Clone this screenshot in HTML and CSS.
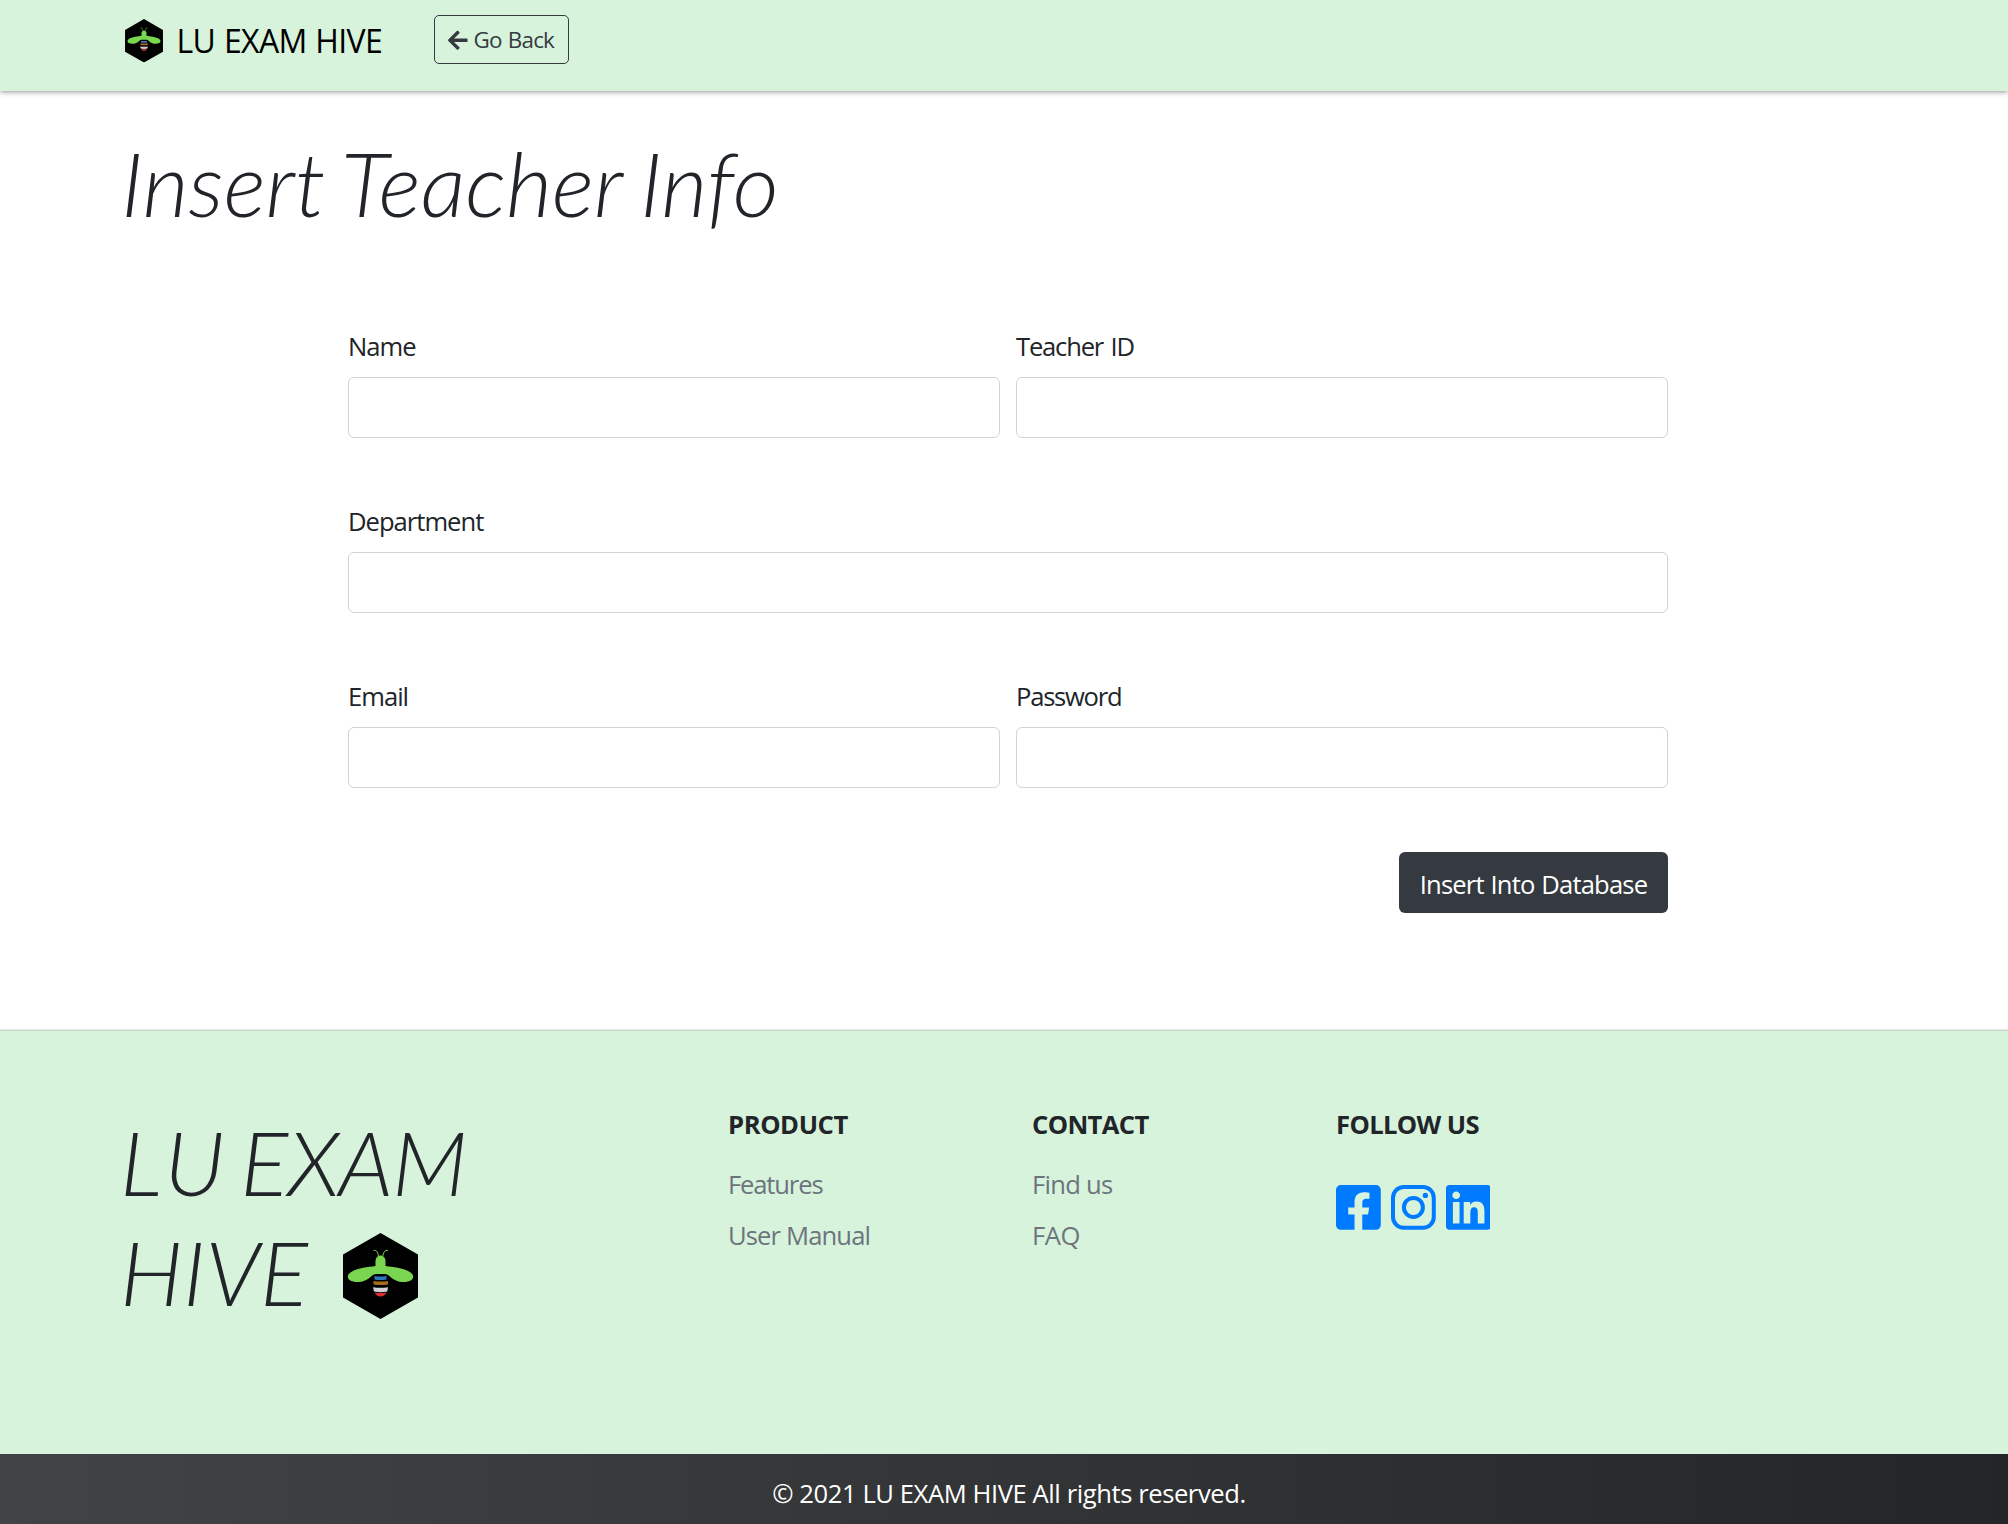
FILE: index.html
```
<!DOCTYPE html>
<html lang="en">
<head>
<meta charset="utf-8">
<title>Insert Teacher Info</title>
<link rel="stylesheet" href="styles.css">
</head>
<body>
<svg class="defs" aria-hidden="true">
  <symbol id="bee" viewBox="0 0 75 86">
    <path d="M37.5 0 75 21.5V64.5L37.5 86 0 64.5V21.5Z" fill="#000"/>
    <path d="M30.500 17.400q4-.8 5 5.500M44.800 17.400q-4-.8-5 5.500" fill="none" stroke="#7ad651" stroke-width="1"/>
    <path d="M32.500 33v-5q.500-5.500 5-5.500t5 5.500v5C50 34 60 35 66 38.500 71 41 71 45 68.500 47 62 51 52 49 47 43.500Q45 41 42 41H33Q30 41 28 43.500C23 49 13 51 6.500 47 4 45 4 41 9 38.500 15 35 25 34 32.500 33Z" fill="#7ad651"/>
    <path d="M31.500 43Q37.500 44 43.500 43V46.600Q37.500 47.600 31.500 46.600Z" fill="#2f78c0"/>
    <path d="M30.500 48Q37.500 49.200 45 48V51.400Q37.500 52.800 30.500 51.400Z" fill="#a8691c"/>
    <path d="M30 54.200Q37.500 55.400 45 54.200L44.300 58.500Q37.500 59.800 31 58.500Z" fill="#d0d0d4"/>
    <path d="M31.700 59.500Q37.500 60.500 43.500 59.500 41.500 63.500 37.500 63.500T31.700 59.500Z" fill="#e02f2f"/>
  </symbol>
</svg>

<header class="navbar">
  <a class="brand"><svg class="brand-logo"><use href="#bee"/></svg><span class="brand-name">LU EXAM HIVE</span></a>
  <a class="back"><svg class="arrow" viewBox="0 0 448 512"><path fill="currentColor" d="M257.500 445.100l-22.200 22.200c-9.400 9.400-24.600 9.400-33.900 0L7 273c-9.400-9.400-9.400-24.600 0-33.900L201.400 44.700c9.400-9.400 24.600-9.400 33.900 0l22.200 22.200c9.500 9.500 9.300 25-.4 34.300L136.600 216H424c13.300 0 24 10.700 24 24v32c0 13.300-10.700 24-24 24H136.600l120.500 114.800c9.800 9.300 10 24.800.4 34.300z"/></svg><span>Go Back</span></a>
</header>

<main>
  <h1 class="title">Insert Teacher Info</h1>
  <form class="form">
    <div class="row">
      <label class="field"><span class="label">Name</span><input class="input" type="text"></label>
      <label class="field"><span class="label label-id">Teacher ID</span><input class="input" type="text"></label>
    </div>
    <div class="row">
      <label class="field"><span class="label">Department</span><input class="input" type="text"></label>
    </div>
    <div class="row">
      <label class="field"><span class="label">Email</span><input class="input" type="email"></label>
      <label class="field"><span class="label label-password">Password</span><input class="input" type="password"></label>
    </div>
    <button class="submit" type="button">Insert Into Database</button>
  </form>
</main>

<footer class="footer">
  <div class="footer-brand">
    <div class="footer-line footer-lu">LU EXAM</div>
    <div class="footer-line footer-hive"><span>HIVE</span><svg class="footer-logo"><use href="#bee"/></svg></div>
  </div>
  <div class="col">
    <h2 class="heading heading-product">Product</h2>
    <a class="link link-features">Features</a>
    <a class="link">User Manual</a>
  </div>
  <div class="col">
    <h2 class="heading">Contact</h2>
    <a class="link link-find">Find us</a>
    <a class="link link-faq">FAQ</a>
  </div>
  <div class="col">
    <h2 class="heading">Follow us</h2>
    <div class="social">
      <svg viewBox="0 32 448 448"><path fill="currentColor" d="M400 32H48A48 48 0 0 0 0 80v352a48 48 0 0 0 48 48h137.250V327.690h-63V256h63v-54.640c0-62.150 37-96.480 93.670-96.480 27.140 0 55.520 4.840 55.520 4.840v61h-31.270c-30.810 0-40.420 19.120-40.420 38.730V256h68.780l-11 71.690h-57.780V480H400a48 48 0 0 0 48-48V80a48 48 0 0 0-48-48z"/></svg>
      <svg viewBox="0 0 448 448" fill="none" stroke="currentColor"><rect x="20" y="20" width="408" height="408" rx="108" stroke-width="40"/><circle cx="224" cy="224" r="95" stroke-width="40"/><circle cx="343.700" cy="104.400" r="26.800" fill="currentColor" stroke="none"/></svg>
      <svg viewBox="0 32 448 448"><path fill="currentColor" d="M416 32H31.900C14.300 32 0 46.500 0 64.300v383.400C0 465.500 14.300 480 31.900 480H416c17.600 0 32-14.500 32-32.300V64.300c0-17.800-14.400-32.300-32-32.300zM135.400 416H69V202.200h66.500V416zm-33.200-243c-21.300 0-38.500-17.300-38.500-38.500S80.900 96 102.200 96c21.200 0 38.500 17.300 38.500 38.500 0 21.300-17.200 38.500-38.500 38.500zm282.100 243h-66.400V312c0-24.800-.5-56.700-34.500-56.700-34.600 0-39.900 27-39.900 54.900V416h-66.400V202.200h63.700v29.200h.9c8.900-16.800 30.600-34.500 62.900-34.500 67.200 0 79.700 44.300 79.700 101.900V416z"/></svg>
    </div>
  </div>
</footer>
<div class="copyright">© 2021 LU EXAM HIVE All rights reserved.</div>
</body>
</html>
```
FILE: styles.css
```
* { box-sizing: border-box; }
body {
  margin: 0;
  min-height: 1524px;
  display: flex;
  flex-direction: column;
  background: #fff;
  color: #212529;
  font: 25.6px/38px "Open Sans", sans-serif;
}
h1, h2 { margin: 0; }
.defs { position: absolute; width: 0; height: 0; }

.navbar {
  height: 91px;
  padding: 15px 0 0 125px;
  display: flex;
  align-items: flex-start;
  background: #d8f3dc;
  box-shadow: 0 1px 5px rgba(0, 0, 0, .42);
}
.brand { display: flex; width: 309px; color: #000; }
.brand-logo { width: 38px; height: 43.500px; margin-top: 4px; }
.brand-name {
  margin-left: 13.500px;
  font-size: 32px;
  line-height: 51px;
  letter-spacing: -.02em;
  word-spacing: 1px;
}
.back {
  display: flex;
  width: 135px;
  height: 49px;
  padding-left: 13px;
  border: 1px solid #343a40;
  border-radius: 5px;
  color: #343a40;
  font-size: 22.400px;
  line-height: 48px;
  letter-spacing: -.035em;
  word-spacing: 1px;
}
.arrow { width: 19.600px; height: 22.400px; margin: 12.500px 6px 0 0; }

.title {
  margin: 38px 0 91px 121px;
  font: italic 300 89.600px/107px Lato, sans-serif;
  height: 107px;
  letter-spacing: -.1px;
  word-spacing: -4px;
}
.form {
  width: 1320px;
  margin-left: 348px;
  display: flex;
  flex-direction: column;
  gap: 64px;
}
.row { display: flex; gap: 16px; }
.field { flex: 1; display: flex; flex-direction: column; gap: 12px; }
.label { height: 38px; line-height: 40px; letter-spacing: -.039em; }
.label-id { letter-spacing: -.0468em; word-spacing: 2px; }
.label-password { letter-spacing: -.0486em; }
.input {
  width: 100%;
  height: 61px;
  border: 1px solid #ced4da;
  border-radius: 6px;
  background: #fff;
}
.submit {
  align-self: flex-end;
  width: 269px;
  height: 61px;
  padding: 4px 0 0;
  border: 0;
  border-radius: 6px;
  background: #343a40;
  color: #fff;
  font: inherit;
  letter-spacing: -.033em;
  word-spacing: 1px;
}

.footer {
  height: 424px;
  margin-top: 117px;
  padding-left: 120px;
  display: flex;
  border-top: 1px solid #c3d3c6;
  background: #d8f3dc;
  box-shadow: 0 0 2px rgba(0, 0, 0, .25);
}
.footer-brand {
  width: 608px;
  padding-top: 76px;
  font: italic 300 89.600px/110px Lato, sans-serif;
}
.footer-line { height: 110px; letter-spacing: -.95px; }
.footer-lu { letter-spacing: -1.1px; word-spacing: -5px; }
.footer-lu::first-letter { letter-spacing: 2.500px; }
.footer-hive { display: flex; letter-spacing: .2px; }
.footer-logo { width: 75px; height: 86px; margin: 16px 0 0 35px; }
.col { width: 304px; padding-top: 75px; display: flex; flex-direction: column; }
.heading {
  font-size: 25.600px;
  font-weight: 700;
  letter-spacing: -.0243em;
  text-transform: uppercase;
  margin-bottom: 22px;
}
.heading-product { letter-spacing: -.0159em; }
.link { color: #6c757d; margin-bottom: 13px; letter-spacing: -.034em; }
.link-features { letter-spacing: -.045em; }
.link-find { letter-spacing: -.028em; }
.link-faq { letter-spacing: -.017em; }
.social { display: flex; gap: 10px; margin-top: 19px; color: #007bff; }
.social svg { width: 44.800px; height: 44.800px; }
.copyright {
  height: 70px;
  padding: 21px 0 0 10px;
  background: linear-gradient(to right, #414345, #232526);
  color: #fff;
  text-align: center;
  letter-spacing: -.0165em;
}
```
